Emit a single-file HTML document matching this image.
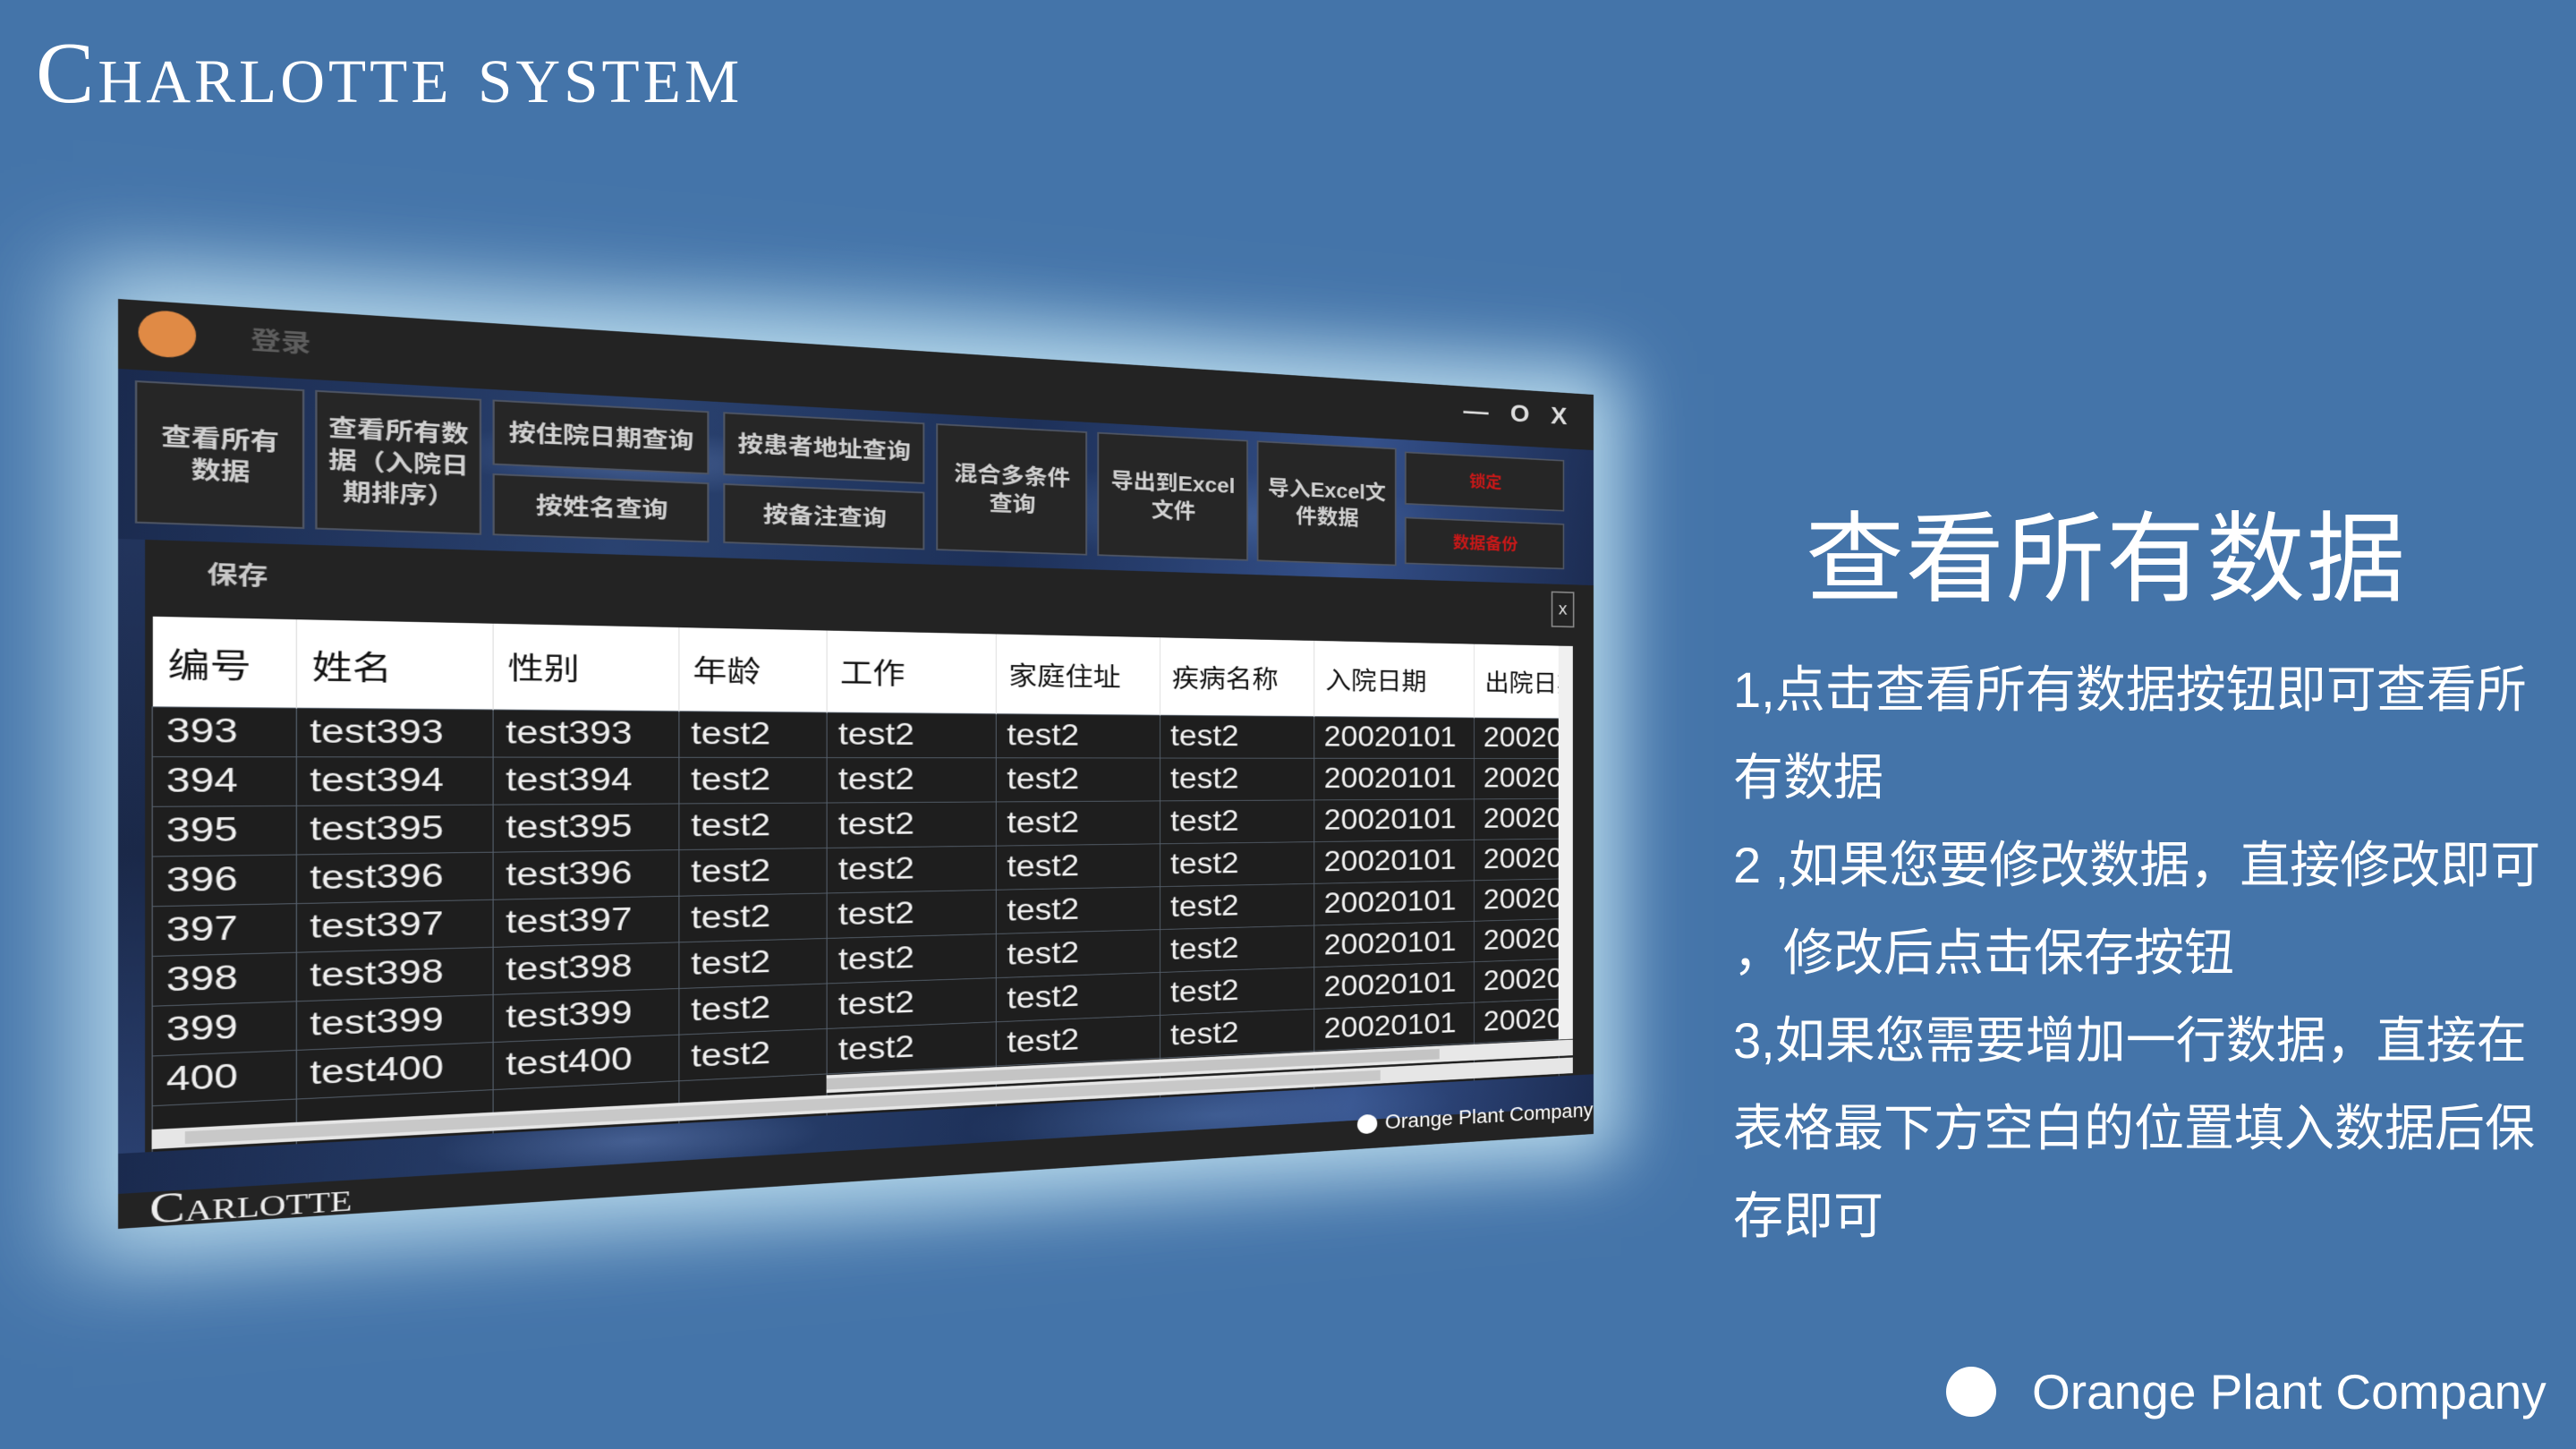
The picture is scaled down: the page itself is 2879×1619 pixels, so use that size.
<!DOCTYPE html>
<html><head><meta charset="utf-8"><style>
*{margin:0;padding:0;box-sizing:border-box}
body{width:2879px;height:1619px;overflow:hidden;background:#4474a9;position:relative;font-family:"Liberation Sans","Noto Sans CJK SC",sans-serif}
.bgglow{position:absolute;left:0;top:0;width:2879px;height:1619px;background:radial-gradient(ellipse 1100px 800px at 950px 830px,rgba(150,205,230,0.55),rgba(68,116,169,0) 70%)}
.title{position:absolute;left:40px;top:29px;color:#fff;font-family:"Liberation Serif",serif;font-variant:small-caps;font-size:98px;letter-spacing:4px;line-height:1.1;white-space:nowrap}
.win{position:absolute;left:0;top:0;width:1649px;height:1039px;transform-origin:0 0;transform:matrix3d(1.27852,0.13385,0,0.00015638,0,1,0,0,0,0,1,0,132,334,0,1);background:#232323;box-shadow:0 0 90px 40px rgba(215,245,255,0.75);overflow:hidden}
.band{position:absolute;left:0;background:
radial-gradient(ellipse 200px 40px at 30% 40%,rgba(120,150,210,0.35),transparent),
radial-gradient(ellipse 300px 60px at 70% 60%,rgba(100,140,200,0.35),transparent),
linear-gradient(100deg,#1a2a4e,#2a4270 30%,#1d3058 55%,#34508a 80%,#1c2c52)}
.btn{position:absolute;background:#262626;border:2px solid #4e5564;color:#d0d0d0;font-weight:bold;font-size:27px;display:flex;align-items:center;justify-content:center;text-align:center;line-height:1.35}
.red{color:#c81818;font-size:22px}
table{position:absolute;left:30px;top:354px;border-collapse:collapse;table-layout:fixed;width:1570px}
th{background:#fff;color:#111;font-weight:normal;height:101px;text-align:left;padding-left:14px;font-size:36px;border-right:1px solid #ddd;white-space:nowrap;overflow:hidden}
td{background:#1e1e1e;color:#f0f0f0;height:56px;font-size:39px;padding-left:12px;border:1px solid #56606c;white-space:nowrap;overflow:hidden}
.right{position:absolute;left:1937px;color:#fff;font-size:56px;line-height:98px;top:722px;font-family:"Liberation Sans","Noto Sans CJK SC",sans-serif;white-space:nowrap}
</style></head><body>
<div class="bgglow"></div>
<div class="title">Charlotte system</div>

<div class="win">
  <div style="position:absolute;left:18px;top:10px;width:52px;height:52px;border-radius:50%;background:#e08a45"></div>
  <div style="position:absolute;left:120px;top:16px;color:#5e5e5e;font-size:28px;font-weight:bold">登录</div>
  <div class="band" style="top:78px;height:190px;width:1649px"></div>
  <div style="position:absolute;left:1470px;top:14px;color:#ddd;font-size:34px;letter-spacing:10px;font-weight:bold;white-space:nowrap">— O X</div>
  <div class="btn" style="left:15px;top:90px;width:155px;height:160px">查看所有<br>数据</div>
  <div class="btn" style="left:180px;top:90px;width:160px;height:160px">查看所有数<br>据（入院日<br>期排序）</div>
  <div class="btn" style="left:351px;top:90px;width:221px;height:77px">按住院日期查询</div>
  <div class="btn" style="left:351px;top:177px;width:221px;height:73px">按姓名查询</div>
  <div class="btn" style="left:587px;top:90px;width:220px;height:77px">按患者地址查询</div>
  <div class="btn" style="left:587px;top:177px;width:220px;height:73px">按备注查询</div>
  <div class="btn" style="left:820px;top:90px;width:175px;height:160px">混合多条件<br>查询</div>
  <div class="btn" style="left:1007px;top:90px;width:184px;height:160px">导出到Excel<br>文件</div>
  <div class="btn" style="left:1202px;top:90px;width:179px;height:160px">导入Excel文<br>件数据</div>
  <div class="btn red" style="left:1392px;top:94px;width:216px;height:72px">锁定</div>
  <div class="btn red" style="left:1392px;top:183px;width:216px;height:64px">数据备份</div>
  <div style="position:absolute;left:80px;top:284px;color:#c8c8c8;font-size:28px;font-weight:bold">保存</div>
  <div style="position:absolute;left:1590px;top:278px;width:32px;height:50px;border:2px solid #888;color:#ddd;font-size:24px;display:flex;align-items:center;justify-content:center">x</div>
  <div style="position:absolute;left:0;top:268px;width:24px;height:700px;background:linear-gradient(180deg,#22345c,#1a2848,#2a4070)"></div>
  <table>
    <colgroup><col style="width:132px"><col style="width:189px"><col style="width:189px"><col style="width:158px"><col style="width:190px"><col style="width:194px"><col style="width:192px"><col style="width:210px"><col style="width:116px"></colgroup>
    <tr><th style="font-size:38px">编号</th><th style="font-size:38px">姓名</th><th>性别</th><th>年龄</th><th>工作</th><th style="font-size:33px">家庭住址</th><th style="font-size:33px">疾病名称</th><th style="font-size:33px">入院日期</th><th style="font-size:33px">出院日期</th></tr>
    <tr><td>393</td><td>test393</td><td>test393</td><td>test2</td><td>test2</td><td>test2</td><td>test2</td><td>20020101</td><td>20020201</td></tr>
    <tr><td>394</td><td>test394</td><td>test394</td><td>test2</td><td>test2</td><td>test2</td><td>test2</td><td>20020101</td><td>20020201</td></tr>
    <tr><td>395</td><td>test395</td><td>test395</td><td>test2</td><td>test2</td><td>test2</td><td>test2</td><td>20020101</td><td>20020201</td></tr>
    <tr><td>396</td><td>test396</td><td>test396</td><td>test2</td><td>test2</td><td>test2</td><td>test2</td><td>20020101</td><td>20020201</td></tr>
    <tr><td>397</td><td>test397</td><td>test397</td><td>test2</td><td>test2</td><td>test2</td><td>test2</td><td>20020101</td><td>20020201</td></tr>
    <tr><td>398</td><td>test398</td><td>test398</td><td>test2</td><td>test2</td><td>test2</td><td>test2</td><td>20020101</td><td>20020201</td></tr>
    <tr><td>399</td><td>test399</td><td>test399</td><td>test2</td><td>test2</td><td>test2</td><td>test2</td><td>20020101</td><td>20020201</td></tr>
    <tr><td>400</td><td>test400</td><td>test400</td><td>test2</td><td>test2</td><td>test2</td><td>test2</td><td>20020101</td><td>20020201</td></tr>
    <tr><td style="height:26px"></td><td style="height:26px"></td><td></td><td></td><td></td><td></td><td></td><td></td><td></td></tr>
  </table>
  <div style="position:absolute;left:1600px;top:354px;width:20px;height:550px;background:#f0f0f0"></div>
  <div style="position:absolute;left:698px;top:905px;width:922px;height:22px;background:#e8e8e8"></div>
  <div style="position:absolute;left:698px;top:909px;width:740px;height:14px;background:#c4c4c4"></div>
  <div style="position:absolute;left:30px;top:930px;width:1590px;height:22px;background:#e6e6e6"></div>
  <div style="position:absolute;left:60px;top:934px;width:1300px;height:14px;background:#c8c8c8"></div>
  <div class="band" style="top:955px;height:45px;width:1649px"></div>
  <div style="position:absolute;left:1330px;top:990px;display:flex;align-items:center;gap:10px;color:#fff;font-size:27px;white-space:nowrap"><span style="width:26px;height:26px;border-radius:50%;background:#fff;display:inline-block"></span>Orange Plant Company</div>
  <div style="position:absolute;left:28px;top:992px;color:#eee;font-family:'Liberation Serif',serif;font-variant:small-caps;font-size:48px">Carlotte</div>
</div>

<div style="position:absolute;left:2018px;top:535px;color:#fff;font-size:110px;letter-spacing:2px;font-family:'Liberation Sans','Noto Sans CJK SC',sans-serif">查看所有数据</div>
<div class="right">1,点击查看所有数据按钮即可查看所<br>有数据<br>2 ,如果您要修改数据，直接修改即可<br>，修改后点击保存按钮<br>3,如果您需要增加一行数据，直接在<br>表格最下方空白的位置填入数据后保<br>存即可</div>

<div style="position:absolute;left:2175px;top:1527px;width:56px;height:56px;border-radius:50%;background:#fff"></div>
<div style="position:absolute;left:2271px;top:1522px;color:#fff;font-size:55px;line-height:66px;white-space:nowrap">Orange Plant Company</div>
</body></html>
